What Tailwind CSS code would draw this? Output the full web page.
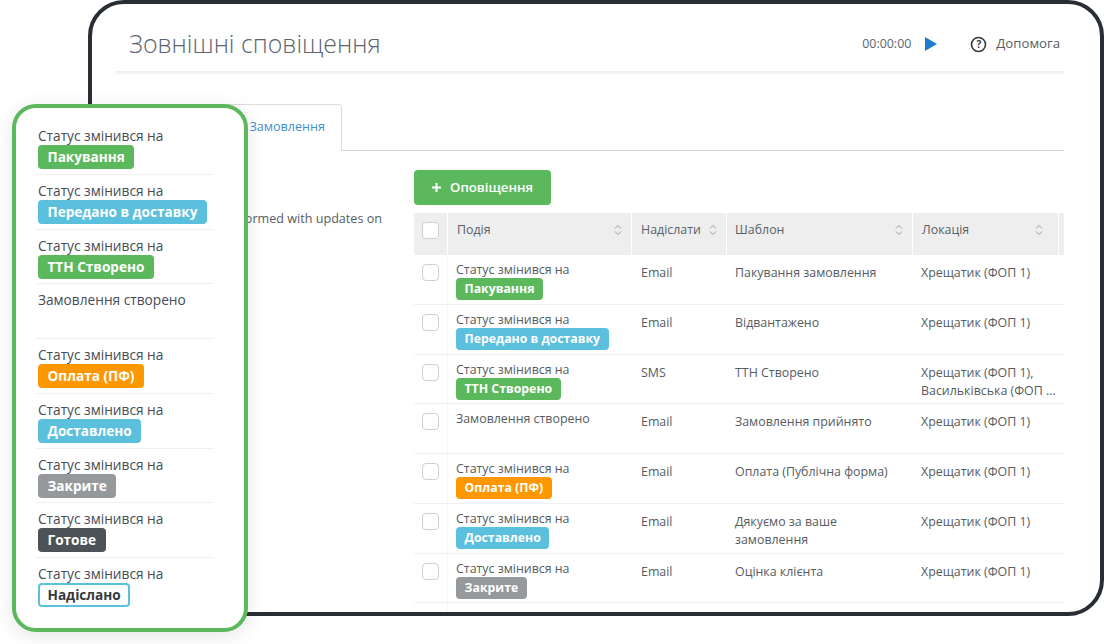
<!DOCTYPE html>
<html lang="uk">
<head>
<meta charset="UTF-8">
<title>Зовнішні сповіщення</title>
<script src="https://cdn.jsdelivr.net/npm/@tailwindcss/browser@4"></script>
</head>
<body class="bg-white font-['Open_Sans',sans-serif]">
<div class="relative w-[1104px] h-[644px] overflow-hidden bg-white">

  <!-- main window -->
  <div class="ml-[88px] w-[1016px] h-[616px] border-4 border-[#282e33] rounded-[36px] overflow-hidden pl-[24px] pr-[36px] text-[#555c63]">
    <div class="flex items-center h-[69px] border-b-2 border-[#f0f0f0] shadow-[0_2px_2px_rgba(0,0,0,0.03)] pl-[13px] pr-[4px] pt-[13px]">
      <h1 class="text-[24.9px] font-light text-[#5a6570]">Зовнішні сповіщення</h1>
      <span class="ml-auto text-[12.4px] text-[#5a6570]">00:00:00</span>
      <svg class="ml-[14px] w-[12px] h-[14px]" viewBox="0 0 12 14"><path d="M0 0L12 7L0 14Z" fill="#1f7ccb"/></svg>
      <svg class="ml-[33px] w-[17px] h-[17px]" viewBox="0 0 17 17"><circle cx="8.5" cy="8.5" r="7" fill="none" stroke="#33393f" stroke-width="1.6"/></svg>
      <span class="relative -ml-[13px] w-[9px] text-center text-[10px] font-bold text-[#33393f]">?</span>
      <span class="ml-[13px] text-[13.2px] text-[#555c63]">Допомога</span>
    </div>

    <div class="mt-[31px] h-[47px] border-b border-[#d2d2d2] flex justify-end pr-[722px]">
      <div class="w-[120px] h-[47px] border border-b-white border-[#dcdcdc] rounded-t-[4px] bg-white flex items-center justify-end pr-[16px] text-[12.6px] text-[#3f8fd2]">Замовлення</div>
    </div>

    <div class="flex mt-[19px]">
      <div class="w-[298px] shrink-0 pr-[32px] pt-[40px] flex justify-end">
        <p class="text-[12.6px] whitespace-nowrap">informed with updates on</p>
      </div>
      <div class="flex-1 min-w-0 overflow-hidden">
        <button class="flex items-center h-[35px] w-[136.5px] rounded-[4px] bg-[#5cb85c] text-white text-[13.2px] font-semibold pl-[17px] gap-[8px]">
          <svg class="w-[11px] h-[11px]" viewBox="0 0 11 11"><path d="M5.5 1v9M1 5.5h9" stroke="#fff" stroke-width="2"/></svg>
          Оповіщення
        </button>

        <div class="mt-[8px] w-[650px] text-[12.4px] leading-[18px]">
          <div class="grid grid-cols-[33px_183px_94px_185px_145px_1fr] gap-x-px h-[42px] bg-white text-[#5a6168]">
            <div class="bg-[#eeeeee] flex items-center pl-[8px] pb-[8px]"><span class="w-[17px] h-[17px] rounded-[4px] border border-[#cfcfcf] bg-white"></span></div>
            <div class="bg-[#eeeeee] flex items-center justify-between pl-[9px] pr-[9px] pb-[8px]">Подія
              <svg class="w-[8px] h-[12px]" viewBox="0 0 8 12"><path d="M1 4.5L4 1.5L7 4.5M1 7.5L4 10.5L7 7.5" fill="none" stroke="#9a9a9a" stroke-width="1"/></svg></div>
            <div class="bg-[#eeeeee] flex items-center justify-between pl-[9px] pr-[9px] pb-[8px]">Надіслати
              <svg class="w-[8px] h-[12px]" viewBox="0 0 8 12"><path d="M1 4.5L4 1.5L7 4.5M1 7.5L4 10.5L7 7.5" fill="none" stroke="#9a9a9a" stroke-width="1"/></svg></div>
            <div class="bg-[#eeeeee] flex items-center justify-between pl-[8px] pr-[9px] pb-[8px]">Шаблон
              <svg class="w-[8px] h-[12px]" viewBox="0 0 8 12"><path d="M1 4.5L4 1.5L7 4.5M1 7.5L4 10.5L7 7.5" fill="none" stroke="#9a9a9a" stroke-width="1"/></svg></div>
            <div class="bg-[#eeeeee] flex items-center justify-between pl-[9px] pr-[15px] pb-[8px]">Локація
              <svg class="w-[8px] h-[12px]" viewBox="0 0 8 12"><path d="M1 4.5L4 1.5L7 4.5M1 7.5L4 10.5L7 7.5" fill="none" stroke="#9a9a9a" stroke-width="1"/></svg></div>
            <div class="bg-[#eeeeee]"></div>
          </div>

          <div class="grid grid-cols-[33px_1px_184px_95px_186px_1fr] h-[49.75px] border-b border-[#f0f0f0]">
            <div class="pl-[8px] pt-[9px]"><span class="block w-[17px] h-[17px] rounded-[4px] border border-[#cfcfcf]"></span></div><div class="bg-[#f6f6f6]"></div>
            <div class="pl-[8px] pt-[6px]"><p class="leading-[17px]">Статус змінився на</p><span class="inline-block h-[22px] rounded-[4px] bg-[#5cb85c] px-[8.5px] text-[12.3px] text-white font-bold leading-[22px]">Пакування</span></div>
            <div class="pl-[9px] pt-[9px]">Email</div><div class="pl-[8px] pt-[9px]">Пакування замовлення</div><div class="pl-[8px] pt-[9px]">Хрещатик (ФОП 1)</div>
          </div>
          <div class="grid grid-cols-[33px_1px_184px_95px_186px_1fr] h-[49.75px] border-b border-[#f0f0f0]">
            <div class="pl-[8px] pt-[9px]"><span class="block w-[17px] h-[17px] rounded-[4px] border border-[#cfcfcf]"></span></div><div class="bg-[#f6f6f6]"></div>
            <div class="pl-[8px] pt-[6px]"><p class="leading-[17px]">Статус змінився на</p><span class="inline-block h-[22px] rounded-[4px] bg-[#5bc0de] px-[8.5px] text-[12.3px] text-white font-bold leading-[22px]">Передано в доставку</span></div>
            <div class="pl-[9px] pt-[9px]">Email</div><div class="pl-[8px] pt-[9px]">Відвантажено</div><div class="pl-[8px] pt-[9px]">Хрещатик (ФОП 1)</div>
          </div>
          <div class="grid grid-cols-[33px_1px_184px_95px_186px_1fr] h-[49.75px] border-b border-[#f0f0f0]">
            <div class="pl-[8px] pt-[9px]"><span class="block w-[17px] h-[17px] rounded-[4px] border border-[#cfcfcf]"></span></div><div class="bg-[#f6f6f6]"></div>
            <div class="pl-[8px] pt-[6px]"><p class="leading-[17px]">Статус змінився на</p><span class="inline-block h-[22px] rounded-[4px] bg-[#5cb85c] px-[8.5px] text-[12.3px] text-white font-bold leading-[22px]">ТТН Створено</span></div>
            <div class="pl-[9px] pt-[9px]">SMS</div><div class="pl-[8px] pt-[9px]">ТТН Створено</div><div class="pl-[8px] pt-[9px] whitespace-nowrap">Хрещатик (ФОП 1),<br>Васильківська (ФОП ...</div>
          </div>
          <div class="grid grid-cols-[33px_1px_184px_95px_186px_1fr] h-[49.75px] border-b border-[#f0f0f0]">
            <div class="pl-[8px] pt-[9px]"><span class="block w-[17px] h-[17px] rounded-[4px] border border-[#cfcfcf]"></span></div><div class="bg-[#f6f6f6]"></div>
            <div class="pl-[8px] pt-[6px]"><p class="leading-[17px]">Замовлення створено</p></div>
            <div class="pl-[9px] pt-[9px]">Email</div><div class="pl-[8px] pt-[9px]">Замовлення прийнято</div><div class="pl-[8px] pt-[9px]">Хрещатик (ФОП 1)</div>
          </div>
          <div class="grid grid-cols-[33px_1px_184px_95px_186px_1fr] h-[49.75px] border-b border-[#f0f0f0]">
            <div class="pl-[8px] pt-[9px]"><span class="block w-[17px] h-[17px] rounded-[4px] border border-[#cfcfcf]"></span></div><div class="bg-[#f6f6f6]"></div>
            <div class="pl-[8px] pt-[6px]"><p class="leading-[17px]">Статус змінився на</p><span class="inline-block h-[22px] rounded-[4px] bg-[#ff9800] px-[8.5px] text-[12.3px] text-white font-bold leading-[22px]">Оплата (ПФ)</span></div>
            <div class="pl-[9px] pt-[9px]">Email</div><div class="pl-[8px] pt-[9px]">Оплата (Публічна форма)</div><div class="pl-[8px] pt-[9px]">Хрещатик (ФОП 1)</div>
          </div>
          <div class="grid grid-cols-[33px_1px_184px_95px_186px_1fr] h-[49.75px] border-b border-[#f0f0f0]">
            <div class="pl-[8px] pt-[9px]"><span class="block w-[17px] h-[17px] rounded-[4px] border border-[#cfcfcf]"></span></div><div class="bg-[#f6f6f6]"></div>
            <div class="pl-[8px] pt-[6px]"><p class="leading-[17px]">Статус змінився на</p><span class="inline-block h-[22px] rounded-[4px] bg-[#5bc0de] px-[8.5px] text-[12.3px] text-white font-bold leading-[22px]">Доставлено</span></div>
            <div class="pl-[9px] pt-[9px]">Email</div><div class="pl-[8px] pt-[9px]">Дякуємо за ваше<br>замовлення</div><div class="pl-[8px] pt-[9px]">Хрещатик (ФОП 1)</div>
          </div>
          <div class="grid grid-cols-[33px_1px_184px_95px_186px_1fr] h-[49.75px] border-b border-[#f0f0f0]">
            <div class="pl-[8px] pt-[9px]"><span class="block w-[17px] h-[17px] rounded-[4px] border border-[#cfcfcf]"></span></div><div class="bg-[#f6f6f6]"></div>
            <div class="pl-[8px] pt-[6px]"><p class="leading-[17px]">Статус змінився на</p><span class="inline-block h-[22px] rounded-[4px] bg-[#96999c] px-[8.5px] text-[12.3px] text-white font-bold leading-[22px]">Закрите</span></div>
            <div class="pl-[9px] pt-[9px]">Email</div><div class="pl-[8px] pt-[9px]">Оцінка клієнта</div><div class="pl-[8px] pt-[9px]">Хрещатик (ФОП 1)</div>
          </div>
          <div class="grid grid-cols-[33px_1px_184px_95px_186px_1fr] h-[49.75px]">
            <div class="pl-[8px] pt-[9px]"><span class="block w-[17px] h-[17px] rounded-[4px] border border-[#cfcfcf]"></span></div><div class="bg-[#f6f6f6]"></div>
          </div>
        </div>
      </div>
    </div>
  </div>

  <!-- status legend card, lies over the window -->
  <div class="absolute left-[12px] top-[104px] w-[236px] h-[528px] border-4 border-[#5cb85c] rounded-[24px] bg-white shadow-[0_4px_20px_rgba(0,0,0,0.10)] pl-[20px] pr-[30px] pt-[12px] text-[13.7px] text-[#464c52]">
    <div class="h-[54.75px] border-b border-[#f0f0f0] pl-[2px] pt-[6px]"><p class="leading-[19px]">Статус змінився на</p><span class="inline-block h-[24px] rounded-[4px] bg-[#5cb85c] px-[9.5px] text-[13.6px] text-white font-bold leading-[24px]">Пакування</span></div>
    <div class="h-[54.75px] border-b border-[#f0f0f0] pl-[2px] pt-[6px]"><p class="leading-[19px]">Статус змінився на</p><span class="inline-block h-[24px] rounded-[4px] bg-[#5bc0de] px-[9.5px] text-[13.6px] text-white font-bold leading-[24px]">Передано в доставку</span></div>
    <div class="h-[54.75px] border-b border-[#f0f0f0] pl-[2px] pt-[6px]"><p class="leading-[19px]">Статус змінився на</p><span class="inline-block h-[24px] rounded-[4px] bg-[#5cb85c] px-[9.5px] text-[13.6px] text-white font-bold leading-[24px]">ТТН Створено</span></div>
    <div class="h-[54.75px] border-b border-[#f0f0f0] pl-[2px] pt-[6px]"><p class="leading-[19px]">Замовлення створено</p></div>
    <div class="h-[54.75px] border-b border-[#f0f0f0] pl-[2px] pt-[6px]"><p class="leading-[19px]">Статус змінився на</p><span class="inline-block h-[24px] rounded-[4px] bg-[#ff9800] px-[9.5px] text-[13.6px] text-white font-bold leading-[24px]">Оплата (ПФ)</span></div>
    <div class="h-[54.75px] border-b border-[#f0f0f0] pl-[2px] pt-[6px]"><p class="leading-[19px]">Статус змінився на</p><span class="inline-block h-[24px] rounded-[4px] bg-[#5bc0de] px-[9.5px] text-[13.6px] text-white font-bold leading-[24px]">Доставлено</span></div>
    <div class="h-[54.75px] border-b border-[#f0f0f0] pl-[2px] pt-[6px]"><p class="leading-[19px]">Статус змінився на</p><span class="inline-block h-[24px] rounded-[4px] bg-[#96999c] px-[9.5px] text-[13.6px] text-white font-bold leading-[24px]">Закрите</span></div>
    <div class="h-[54.75px] border-b border-[#f0f0f0] pl-[2px] pt-[6px]"><p class="leading-[19px]">Статус змінився на</p><span class="inline-block h-[24px] rounded-[4px] bg-[#4d5257] px-[9.5px] text-[13.6px] text-white font-bold leading-[24px]">Готове</span></div>
    <div class="h-[54.75px] pl-[2px] pt-[6px]"><p class="leading-[19px]">Статус змінився на</p><span class="inline-block h-[24px] rounded-[4px] border-2 border-[#5bc0de] bg-white px-[7.5px] text-[13.6px] text-[#33393f] font-bold leading-[20px]">Надіслано</span></div>
  </div>
</div>
</body>
</html>
